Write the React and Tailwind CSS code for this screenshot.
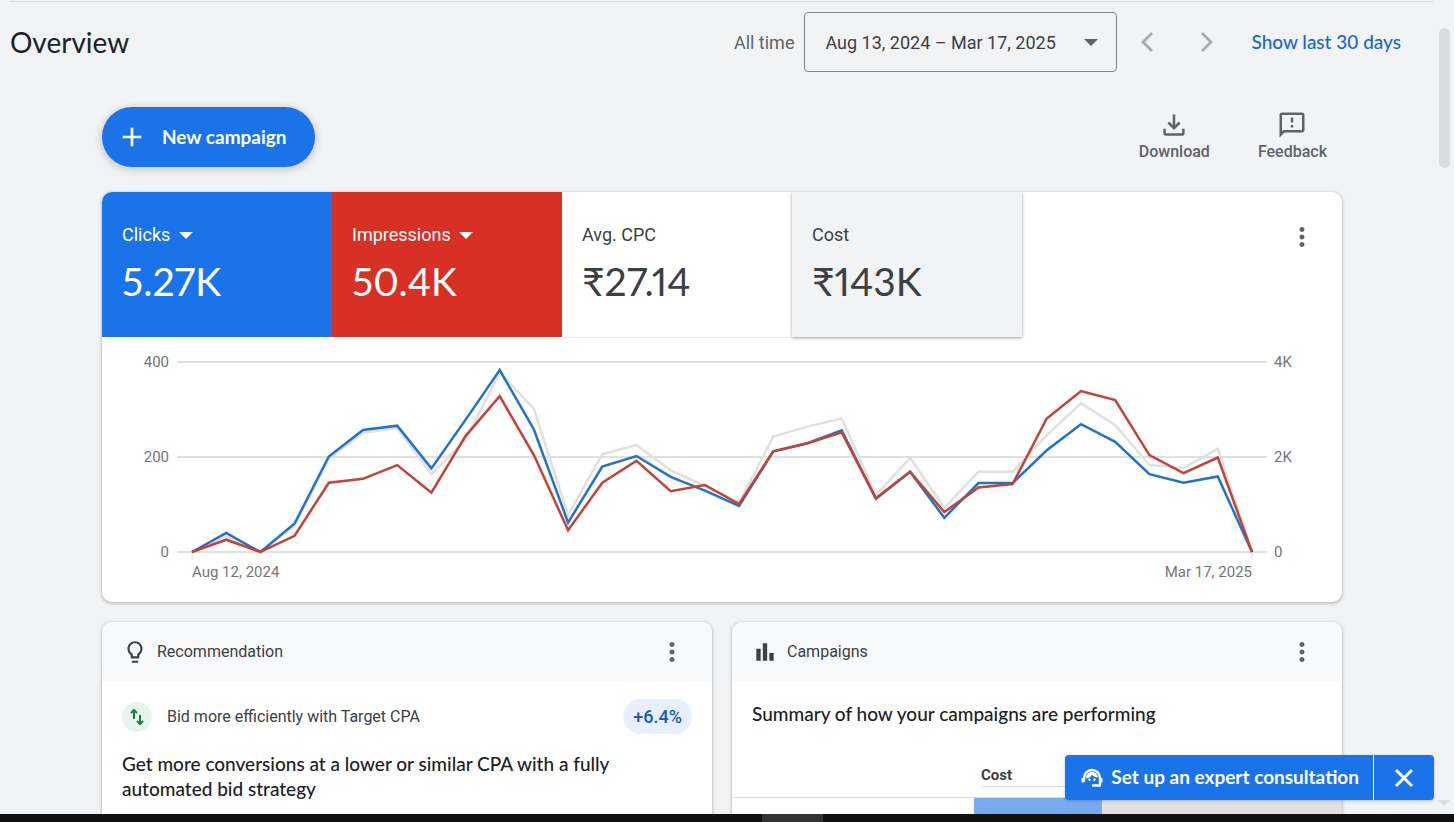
import clsx from "clsx";
import {
  MdAdd,
  MdBarChart,
  MdLightbulbOutline,
  MdMoreVert,
  MdOutlineFeedback,
} from "react-icons/md";

const CLICKS = [
  0, 40, 0, 60, 201, 257, 266, 176, 278, 383, 258, 62, 180, 202, 158, 129, 97,
  212, 229, 256, 112, 169, 72, 145, 145, 214, 269, 232, 164, 146, 159, 0,
];
const IMPRESSIONS = [
  0, 260, 0, 340, 1460, 1540, 1830, 1250, 2440, 3280, 2040, 460, 1460, 1920,
  1280, 1410, 1010, 2120, 2290, 2520, 1130, 1690, 840, 1360, 1430, 2810, 3390,
  3200, 2040, 1660, 1990, 0,
];
const COST = [
  0, 34, 0, 55, 196, 251, 261, 164, 236, 378, 301, 78, 206, 225, 172, 139, 104,
  243, 264, 281, 120, 198, 93, 169, 169, 246, 313, 267, 183, 177, 217, 0,
];

const CHART = { left: 90, right: 1150, top: 25, bottom: 215 };

const toPoints = (values, max) =>
  values
    .map((value, i) => {
      const x =
        CHART.left + ((CHART.right - CHART.left) * i) / (values.length - 1);
      const y = CHART.bottom - ((CHART.bottom - CHART.top) * value) / max;
      return `${x.toFixed(1)},${y.toFixed(1)}`;
    })
    .join(" ");

const Caret = ({ className }) => (
  <svg viewBox="0 0 14 7" className={className} aria-hidden="true">
    <path d="M0 0h14L7 7z" fill="currentColor" />
  </svg>
);

const Chevron = ({ d }) => (
  <svg
    viewBox="0 0 12 20"
    className="h-5 w-3"
    fill="none"
    stroke="currentColor"
    strokeWidth="2.8"
    aria-hidden="true"
  >
    <path d={d} />
  </svg>
);

const AgentIcon = ({ className }) => (
  <svg
    viewBox="0 0 22 20"
    className={className}
    fill="none"
    stroke="currentColor"
    aria-hidden="true"
  >
    <path
      d="M3 14v-4a8 8 0 0 1 16 0v7.500h-8"
      strokeWidth="2.4"
      strokeLinejoin="round"
    />
    <path d="M1.500 10v4.500M20.500 10v4.500" strokeWidth="2" />
    <path
      d="M5 10.500C5 6.500 7.500 4 11 4c3.300 0 5.500 2.200 6 5.300-2.600.2-4.800-.9-6-2.800-1 2.100-3 3.700-6 4z"
      fill="currentColor"
      stroke="none"
    />
    <circle cx="8.500" cy="11.800" r="1.200" fill="currentColor" stroke="none" />
    <circle cx="13.500" cy="11.800" r="1.200" fill="currentColor" stroke="none" />
  </svg>
);

const MoreButton = ({ label }) => (
  <button aria-label={label} className="text-[#5f6368]">
    <MdMoreVert className="size-[30px]" />
  </button>
);

const Header = () => (
  <header className="flex items-center border-t border-[#dadce0] pt-[10px]">
    <h1 className="flex-1 font-[Lato] text-[28px] leading-9 text-[#202124]">
      Overview
    </h1>
    <label htmlFor="range" className="mr-[10px] text-[18px] text-[#5f6368]">
      All time
    </label>
    <div className="relative">
      <select
        id="range"
        className="h-[60px] w-[313px] appearance-none rounded-[4px] border border-[#80868b] px-5 text-[18px] text-[#3c4043]"
      >
        <option>Aug 13, 2024 – Mar 17, 2025</option>
      </select>
      <Caret className="pointer-events-none absolute top-[27px] right-[19px] w-[14px] text-[#5f6368]" />
    </div>
    <button aria-label="Previous period" className="ml-6 text-[#a8abaf]">
      <Chevron d="M11 1L2 10l9 9" />
    </button>
    <button aria-label="Next period" className="ml-12 text-[#a8abaf]">
      <Chevron d="M1 1l9 9-9 9" />
    </button>
    <a
      href="#last30"
      className="mr-[33px] ml-[38px] font-[Lato] text-[19px] leading-6 font-medium text-[#1967d2]"
    >
      Show last 30 days
    </a>
  </header>
);

const Toolbar = () => (
  <div className="mt-[35px] flex items-center">
    <button className="flex h-[60px] items-center rounded-full bg-[#1a73e8] pr-7 pl-[14px] font-[Lato] text-[19px] font-bold text-white shadow-[0_2px_6px_2px_rgba(60,64,67,0.2)]">
      <MdAdd className="mr-[14px] size-8" />
      New campaign
    </button>
    <div className="mr-[15px] ml-auto flex gap-12 text-[16px] font-medium text-[#5f6368]">
      <button className="flex flex-col items-center">
        <svg
          viewBox="0 0 24 24"
          className="size-[30px]"
          fill="none"
          stroke="currentColor"
          strokeWidth="2"
          aria-hidden="true"
        >
          <path d="M12 3.500v11M7.500 10L12 14.500l4.500-4.500M4.500 15v3.500a1 1 0 0 0 1 1h13a1 1 0 0 0 1-1V15" />
        </svg>
        Download
      </button>
      <button className="flex flex-col items-center">
        <MdOutlineFeedback className="size-[30px]" />
        Feedback
      </button>
    </div>
  </div>
);

const Metric = ({ label, value, hasMenu, className }) => (
  <div className={clsx("w-[230px] px-5 pt-[31px] pb-8", className)}>
    {hasMenu ? (
      <div className="relative w-fit">
        <select
          aria-label={`${label} metric`}
          className="block h-6 appearance-none pr-[22px] text-[18px] leading-6"
        >
          <option>{label}</option>
        </select>
        <Caret className="pointer-events-none absolute top-[9px] right-0 w-[14px]" />
      </div>
    ) : (
      <p className="text-[18px] leading-6">{label}</p>
    )}
    <p className="mt-[10px] font-[Lato] text-[39px] leading-[48px] proportional-nums">
      {value}
    </p>
  </div>
);

const PerformanceChart = () => (
  <svg
    viewBox="0 0 1240 265"
    className="w-full"
    role="img"
    aria-label="Clicks and impressions over time"
  >
    <g stroke="#e0e0e0" strokeWidth="2">
      <path d="M75 25h1090M75 120h1090M75 215h1090" />
      <path d="M90 215v8M1150 215v8" strokeWidth="1" />
    </g>
    <g fill="none" strokeWidth="2.5">
      <polyline points={toPoints(COST, 400)} stroke="#e0e0e0" />
      <polyline points={toPoints(CLICKS, 400)} stroke="#2472c8" />
      <polyline points={toPoints(IMPRESSIONS, 4000)} stroke="#c04437" />
    </g>
    <g fill="#757575" className="text-[15px]">
      <g textAnchor="end">
        <text x="67" y="30">400</text>
        <text x="67" y="125">200</text>
        <text x="67" y="220">0</text>
        <text x="1150" y="240">Mar 17, 2025</text>
      </g>
      <text x="1172" y="30">4K</text>
      <text x="1172" y="125">2K</text>
      <text x="1172" y="220">0</text>
      <text x="90" y="240">Aug 12, 2024</text>
    </g>
  </svg>
);

const Card = ({ icon, title, children }) => (
  <section className="min-h-[260px] overflow-hidden rounded-[10px] bg-white shadow-[0_1px_3px_1px_rgba(60,64,67,0.25)]">
    <div className="flex h-[60px] items-center bg-[#f8f9fa] pr-[25px] pl-5 text-[#3c4043]">
      {icon}
      <h2 className="ml-[9px] flex-1 text-[16px]">{title}</h2>
      <MoreButton label={`${title} options`} />
    </div>
    {children}
  </section>
);

const RecommendationCard = () => (
  <Card
    title="Recommendation"
    icon={<MdLightbulbOutline className="size-[26px]" />}
  >
    <div className="px-5 pt-[17px]">
      <div className="flex items-center">
        <span className="flex size-[30px] items-center justify-center rounded-full bg-[#e6f4ea] text-[#188038]">
          <svg
            viewBox="0 0 20 20"
            className="size-5"
            fill="none"
            stroke="currentColor"
            strokeWidth="2"
            aria-hidden="true"
          >
            <path d="M7 12V3M4 6l3-3 3 3M13 8v9M10 14l3 3 3-3" />
          </svg>
        </span>
        <p className="ml-[15px] flex-1 text-[16px] text-[#3c4043]">
          Bid more efficiently with Target CPA
        </p>
        <span className="rounded-full bg-[#e8f0fe] px-[10px] text-[18px] leading-[35px] font-medium text-[#185abc]">
          +6.4%
        </span>
      </div>
      <h3 className="mt-[17px] max-w-[540px] font-[Lato] text-[19px] leading-[25px] font-medium text-[#202124]">
        Get more conversions at a lower or similar CPA with a fully automated
        bid strategy
      </h3>
    </div>
  </Card>
);

const CampaignsCard = () => (
  <Card title="Campaigns" icon={<MdBarChart className="size-[26px]" />}>
    <h3 className="px-5 pt-[19px] font-[Lato] text-[19px] leading-[25px] font-medium text-[#202124]">
      Summary of how your campaigns are performing
    </h3>
    <table className="mt-[38px] w-full table-fixed">
      <colgroup>
        <col className="w-[242px]" />
        <col className="w-32" />
        <col />
      </colgroup>
      <thead>
        <tr className="border-b border-[#dadce0]">
          <td></td>
          <th
            colSpan={2}
            className="px-[7px] pb-[10px] text-left text-[15px] font-bold text-[#3c4043]"
          >
            <div className="border-b border-[#dadce0] leading-[22px]">Cost</div>
          </th>
        </tr>
      </thead>
      <tbody>
        <tr className="h-[50px]">
          <td></td>
          <td className="bg-[#78aaf0]"></td>
          <td className="bg-[#e0e0e0]"></td>
        </tr>
      </tbody>
    </table>
  </Card>
);

const ConsultationBar = () => (
  <div className="absolute right-5 bottom-[14px] flex h-[45px] rounded-[4px] bg-[#1a73e8] text-white shadow-[0_1px_3px_rgba(60,64,67,0.3)]">
    <button className="flex items-center pr-[14px] pl-4 font-[Lato] text-[19px] font-bold">
      <AgentIcon className="mr-2 h-5 w-[22px]" />
      Set up an expert consultation
    </button>
    <button
      aria-label="Close"
      className="flex w-[61px] items-center justify-center border-l border-white"
    >
      <svg
        viewBox="0 0 20 20"
        className="size-5"
        stroke="currentColor"
        strokeWidth="3"
        aria-hidden="true"
      >
        <path d="M2 2l16 16M18 2L2 18" />
      </svg>
    </button>
  </div>
);

const App = () => {
  return (
    <div className="flex h-screen flex-col bg-[#f1f3f4] font-[Roboto,sans-serif]">
      <div className="relative flex min-h-0 flex-1 overflow-hidden">
        <main className="mt-px ml-[10px] min-w-0 flex-1">
          <Header />
          <div className="mx-[92px]">
            <Toolbar />
            <section className="mt-[25px] overflow-hidden rounded-[10px] bg-white shadow-[0_1px_3px_1px_rgba(60,64,67,0.25)]">
              <div className="flex">
                <Metric
                  label="Clicks"
                  value="5.27K"
                  hasMenu
                  className="bg-[#1a73e8] text-white"
                />
                <Metric
                  label="Impressions"
                  value="50.4K"
                  hasMenu
                  className="bg-[#d93025] text-white"
                />
                <Metric
                  label="Avg. CPC"
                  value="₹27.14"
                  className="text-[#3c4043] shadow-[0_1px_0_#e8eaed]"
                />
                <Metric
                  label="Cost"
                  value="₹143K"
                  className="bg-[#f1f3f4] text-[#3c4043] shadow-[0_1px_3px_rgba(60,64,67,0.5)]"
                />
                <div className="mt-[30px] mr-[25px] ml-auto">
                  <MoreButton label="Chart options" />
                </div>
              </div>
              <PerformanceChart />
            </section>
            <div className="mt-5 grid grid-cols-2 gap-5">
              <RecommendationCard />
              <CampaignsCard />
            </div>
          </div>
        </main>
        <div className="flex w-5 flex-col items-center justify-between pt-7 pb-2">
          <div className="h-[140px] w-[11px] rounded-full bg-[#dadce0]"></div>
          <Caret className="w-3 text-[#dadce0]" />
        </div>
        <ConsultationBar />
      </div>
      <footer className="flex h-2 justify-center bg-[#111]">
        <div className="ml-[130px] w-[61px] bg-[#333]"></div>
      </footer>
    </div>
  );
};

export default App;
